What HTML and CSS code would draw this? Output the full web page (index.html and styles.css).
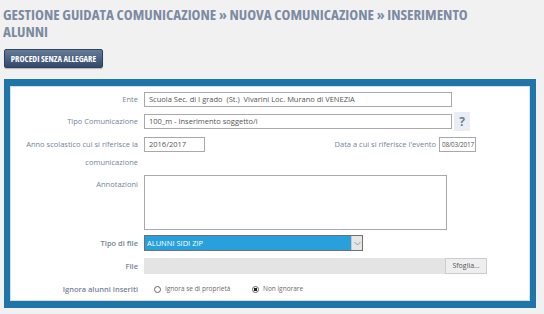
FILE: index.html
```html
<!DOCTYPE html>
<html lang="it">
<head>
    <meta charset="UTF-8">
    <title>Inserimento alunni</title>
    <link rel="stylesheet" href="styles.css">
</head>
<body>
    <div class="page">
        <h1 class="title">Gestione guidata comunicazione » Nuova comunicazione » Inserimento alunni</h1>
        <button type="button" class="btn-procedi">Procedi senza allegare</button>

        <div class="frame">
            <form class="form">
                <!-- Ente -->
                <div class="row">
                    <label class="lbl">Ente</label>
                    <div class="field w-long">Scuola Sec. di I grado&nbsp; (St.)&nbsp; Vivarini Loc. Murano di VENEZIA</div>
                </div>

                <!-- Tipo comunicazione + aiuto -->
                <div class="row">
                    <label class="lbl">Tipo Comunicazione</label>
                    <div class="field w-long">100_m - Inserimento soggetto/i</div>
                    <span class="help">?</span>
                </div>

                <!-- Anno scolastico / data evento -->
                <div class="row">
                    <label class="lbl">Anno scolastico cui si riferisce la comunicazione</label>
                    <div class="field w-anno">2016/2017</div>
                    <label class="lbl lbl-data">Data a cui si riferisce l'evento</label>
                    <div class="field w-data">08/03/2017</div>
                </div>

                <!-- Annotazioni -->
                <div class="row">
                    <label class="lbl">Annotazioni</label>
                    <div class="area"></div>
                </div>

                <!-- Tipo di file -->
                <div class="row">
                    <label class="lbl lbl-bold">Tipo di file</label>
                    <div class="select">
                        <span class="select-value">ALUNNI SIDI ZIP</span>
                        <span class="select-arrow">
                            <svg width="7" height="5" viewBox="0 0 7 5"><path d="M0.5 1 L3.5 4 L6.5 1" fill="none" stroke="#888" stroke-width="0.8"/></svg>
                        </span>
                    </div>
                </div>

                <!-- File -->
                <div class="row row-file">
                    <label class="lbl lbl-bold">File</label>
                    <div class="file">
                        <span class="file-path"></span>
                        <span class="file-btn">Sfoglia...</span>
                    </div>
                </div>

                <!-- Ignora alunni -->
                <div class="row row-radio">
                    <label class="lbl lbl-bold">Ignora alunni inseriti</label>
                    <div class="radios">
                        <span class="radio"><span class="dot"></span>Ignora se di proprietà</span>
                        <span class="radio"><span class="dot checked"></span>Non ignorare</span>
                    </div>
                </div>
            </form>
        </div>
    </div>
</body>
</html>
```

FILE: styles.css
```css
body {
    margin: 0;
    background-color: #f1f1f1;
    font-family: "Open Sans", "DejaVu Sans", sans-serif;
}
.page {
    padding: 6px 8px 0 4px;
}
.title {
    margin: 0 0 0 -1px;
    font-size: 15px;
    line-height: 17px;
    font-weight: 700;
    font-stretch: 75%;
    text-transform: uppercase;
    color: #7b8ba2;
    width: 500px;
}
.btn-procedi {
    display: block;
    margin-top: 9px;
    width: 99px;
    height: 19px;
    padding: 0;
    border: 1px solid #2e4262;
    border-radius: 2px;
    background: linear-gradient(#667b98, #34486a);
    box-shadow: 0 1px 1px rgba(0, 0, 0, 0.25);
    color: #ffffff;
    font-family: "Open Sans", sans-serif;
    font-size: 8.6px;
    font-weight: 700;
    font-stretch: 75%;
    text-transform: uppercase;
}
.frame {
    margin-top: 11px;
    width: 520px;
    border: solid #1f74a8;
    border-width: 7px 6px 7px 6px;
    background-color: #ffffff;
    box-shadow: inset 0 0 0 1px #cfe0ec;
}
.form {
    padding: 4px 0 3px 0;
}
.row {
    display: flex;
    align-items: flex-start;
    margin-bottom: 4px;
}
.lbl {
    width: 128px;
    margin-right: 6px;
    flex-shrink: 0;
    text-align: right;
    font-size: 7.5px;
    line-height: 18px;
    color: #74849a;
}
.lbl-bold {
    font-weight: 600;
}
.lbl-data {
    width: auto;
    margin-left: auto;
    margin-right: 3px;
}
.field {
    box-sizing: border-box;
    height: 15px;
    margin-top: 2px;
    padding: 0 4px;
    border: 1px solid #a9a9a9;
    font-size: 7.5px;
    line-height: 13px;
    color: #555555;
    white-space: nowrap;
    overflow: hidden;
}
.w-long {
    width: 308px;
}
.w-anno {
    width: 61px;
}
.w-data {
    width: 37px;
    margin-right: 54px;
    padding: 0 1px 0 2px;
    font-size: 6.4px;
    letter-spacing: -0.2px;
    overflow: visible;
}
.help {
    width: 16px;
    height: 19px;
    margin-left: 2px;
    background-color: #e9eef4;
    color: #6f7d90;
    font-size: 12px;
    font-weight: 700;
    line-height: 19px;
    text-align: center;
}
.area {
    box-sizing: border-box;
    width: 303px;
    height: 55px;
    border: 1px solid #a9a9a9;
}
.select {
    box-sizing: border-box;
    display: flex;
    width: 219px;
    height: 16px;
    margin-top: 1px;
    border: 1px solid #707070;
    background-color: #27a0dc;
}
.select-value {
    flex: 1;
    padding-left: 2px;
    color: #ffffff;
    font-size: 7.5px;
    line-height: 14px;
}
.select-arrow {
    width: 10px;
    display: flex;
    align-items: center;
    justify-content: center;
    background-color: #e6e6e6;
    border-left: 1px solid #c8c8c8;
}
.row-file .lbl {
    line-height: 20px;
}
.file {
    display: flex;
    width: 343px;
    height: 16px;
    margin-top: 2px;
    background-color: #e4e4e4;
}
.file-path {
    flex: 1;
}
.file-btn {
    box-sizing: border-box;
    width: 42px;
    border: 1px solid #cccccc;
    background-color: #eeeeee;
    color: #555555;
    font-size: 7px;
    line-height: 14px;
    text-align: center;
}
.row-radio {
    margin-top: 4px;
    margin-bottom: 0;
}
.radios {
    display: flex;
    padding-left: 10px;
}
.radio {
    display: flex;
    align-items: center;
    width: 98px;
    font-size: 6.5px;
    line-height: 18px;
    color: #6a6a6a;
}
.dot {
    box-sizing: border-box;
    width: 7px;
    height: 7px;
    margin-right: 4px;
    border: 1px solid #666666;
    border-radius: 50%;
    background-color: #ffffff;
}
.dot.checked {
    background: radial-gradient(circle, #222222 0 1.6px, #ffffff 1.8px);
}
```
